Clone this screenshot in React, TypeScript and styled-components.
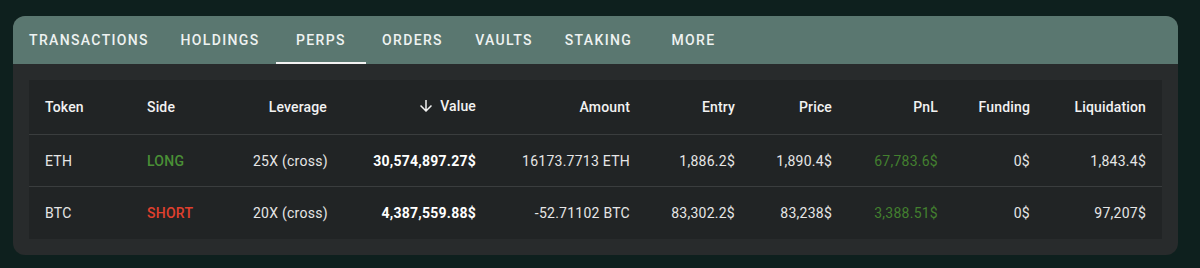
import React from "react";
import styled, { createGlobalStyle } from "styled-components";

const Global = createGlobalStyle`
  html, body { margin: 0; padding: 0; background: #0e201e; }
  body { font-family: Roboto, "Liberation Sans", Arial, sans-serif; -webkit-font-smoothing: antialiased; }
`;

const Page = styled.div`
  padding: 16px 22px 13px 13px;
  height: 268px;
  box-sizing: border-box;
`;

const Card = styled.div`
  width: 1165px;
  background: #282b2c;
  border-radius: 12px;
  overflow: hidden;
`;

const TabBar = styled.div`
  display: flex;
  height: 48px;
  background: #5a7770;
  padding-left: 1px;
`;

const Tab = styled.div<{ $active?: boolean; $w: number }>`
  position: relative;
  width: ${(p) => p.$w}px;
  display: flex;
  align-items: center;
  justify-content: center;
  font-size: 14px;
  font-weight: 500;
  letter-spacing: 1.35px;
  color: #eef2f1;
  text-transform: uppercase;
  &::after {
    content: "";
    display: ${(p) => (p.$active ? "block" : "none")};
    position: absolute;
    left: 0;
    right: 0;
    bottom: 0;
    height: 2px;
    background: #f2f2f2;
  }
`;

const Body = styled.div`
  padding: 16px;
`;

const Table = styled.table`
  width: 1133px;
  table-layout: fixed;
  border-collapse: collapse;
  background: #212425;
`;

const HeadCell = styled.th<{ $align?: string }>`
  height: 54px;
  padding: 0 16px;
  text-align: ${(p) => p.$align || "right"};
  font-size: 14px;
  font-weight: 500;
  letter-spacing: 0.15px;
  color: #f2f2f2;
  border-bottom: 1px solid #3a3d3e;
  white-space: nowrap;
`;

const Row = styled.tr<{ $last?: boolean }>`
  td {
    height: ${(p) => (p.$last ? 52 : 51)}px;
    border-bottom: ${(p) => (p.$last ? "none" : "1px solid #3a3d3e")};
  }
`;

const Cell = styled.td<{ $align?: string; $tone?: string; $weight?: number }>`
  padding: 0 16px;
  text-align: ${(p) => p.$align || "right"};
  font-size: 14px;
  letter-spacing: 0.25px;
  font-weight: ${(p) => p.$weight || 400};
  color: ${(p) =>
    p.$tone === "long"
      ? "#4a8f36"
      : p.$tone === "short"
      ? "#e0402e"
      : p.$tone === "gain"
      ? "#43802f"
      : p.$tone === "strong"
      ? "#ffffff"
      : "#e6e6e6"};
  white-space: nowrap;
`;

const SortLabel = styled.span`
  display: inline-flex;
  align-items: center;
  gap: 5px;
  svg {
    width: 18px;
    height: 18px;
    fill: #f2f2f2;
  }
`;

const tabs: [string, number][] = [
  ["Transactions", 150],
  ["Holdings", 112],
  ["Perps", 90],
  ["Orders", 93],
  ["Vaults", 90],
  ["Staking", 99],
  ["More", 91],
];

const cols = [102, 106, 106, 149, 154, 105, 97, 106, 92, 116];

type R = {
  token: string;
  side: "LONG" | "SHORT";
  lev: string;
  value: string;
  amount: string;
  entry: string;
  price: string;
  pnl: string;
  funding: string;
  liq: string;
};

const rows: R[] = [
  {
    token: "ETH",
    side: "LONG",
    lev: "25X (cross)",
    value: "30,574,897.27$",
    amount: "16173.7713 ETH",
    entry: "1,886.2$",
    price: "1,890.4$",
    pnl: "67,783.6$",
    funding: "0$",
    liq: "1,843.4$",
  },
  {
    token: "BTC",
    side: "SHORT",
    lev: "20X (cross)",
    value: "4,387,559.88$",
    amount: "-52.71102 BTC",
    entry: "83,302.2$",
    price: "83,238$",
    pnl: "3,388.51$",
    funding: "0$",
    liq: "97,207$",
  },
];

export default function App() {
  return (
    <>
      <Global />
      <Page>
        <Card>
          <TabBar>
            {tabs.map(([t, w]) => (
              <Tab key={t} $w={w} $active={t === "Perps"}>
                {t}
              </Tab>
            ))}
          </TabBar>
          <Body>
            <Table>
              <colgroup>
                {cols.map((w, i) => (
                  <col key={i} style={{ width: w }} />
                ))}
              </colgroup>
              <thead>
                <tr>
                  <HeadCell $align="left">Token</HeadCell>
                  <HeadCell $align="left">Side</HeadCell>
                  <HeadCell>Leverage</HeadCell>
                  <HeadCell>
                    <SortLabel>
                      <svg viewBox="0 0 24 24">
                        <path d="M20 12l-1.41-1.41L13 16.17V4h-2v12.17l-5.58-5.59L4 12l8 8 8-8z" />
                      </svg>
                      Value
                    </SortLabel>
                  </HeadCell>
                  <HeadCell>Amount</HeadCell>
                  <HeadCell>Entry</HeadCell>
                  <HeadCell>Price</HeadCell>
                  <HeadCell>PnL</HeadCell>
                  <HeadCell>Funding</HeadCell>
                  <HeadCell>Liquidation</HeadCell>
                </tr>
              </thead>
              <tbody>
                {rows.map((r, i) => (
                  <Row key={r.token} $last={i === rows.length - 1}>
                    <Cell $align="left">{r.token}</Cell>
                    <Cell
                      $align="left"
                      $weight={500}
                      $tone={r.side === "LONG" ? "long" : "short"}
                    >
                      {r.side}
                    </Cell>
                    <Cell>{r.lev}</Cell>
                    <Cell $weight={700} $tone="strong">
                      {r.value}
                    </Cell>
                    <Cell>{r.amount}</Cell>
                    <Cell>{r.entry}</Cell>
                    <Cell>{r.price}</Cell>
                    <Cell $tone="gain">{r.pnl}</Cell>
                    <Cell>{r.funding}</Cell>
                    <Cell>{r.liq}</Cell>
                  </Row>
                ))}
              </tbody>
            </Table>
          </Body>
        </Card>
      </Page>
    </>
  );
}
